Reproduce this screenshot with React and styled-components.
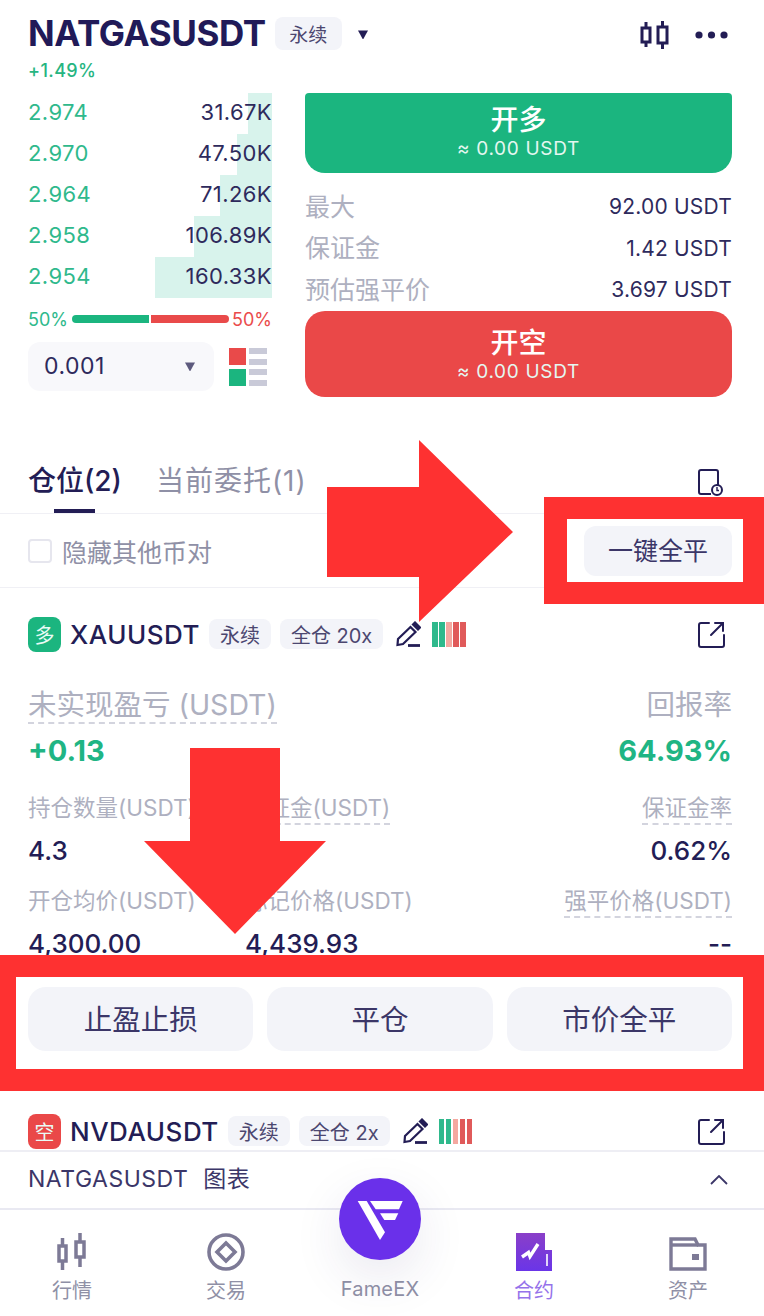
import styled, { createGlobalStyle } from "styled-components";

const asks = [
  { price: "2.974", amount: "31.67K", depth: 24 },
  { price: "2.970", amount: "47.50K", depth: 35 },
  { price: "2.964", amount: "71.26K", depth: 52 },
  { price: "2.958", amount: "106.89K", depth: 78 },
  { price: "2.954", amount: "160.33K", depth: 117 },
];

const meterColors = ["#2fb98c", "#2fb98c", "#f4a8a0", "#e05a5a", "#e05a5a"];

const GlobalStyle = createGlobalStyle`
  html, body {
    margin: 0;
    padding: 0;
    background: #fff;
  }
  body {
    font-family: "Inter", "Noto Sans CJK SC", sans-serif;
    color: #231d55;
  }
  * {
    box-sizing: border-box;
  }
`;

const Page = styled.div`
  position: relative;
  width: 764px;
  height: 1316px;
  overflow: hidden;
  display: flex;
  flex-direction: column;
  background: #fff;
`;

const Header = styled.div`
  height: 93px;
  padding: 15px 32px 0 28px;
  flex-shrink: 0;
`;

const TitleRow = styled.div`
  display: flex;
  align-items: center;
  height: 36px;
`;

const Title = styled.div`
  font-size: 35px;
  font-weight: 700;
  letter-spacing: -0.4px;
  color: #211a58;
`;

const Tag = styled.span`
  display: inline-flex;
  align-items: center;
  justify-content: center;
  height: ${(p) => p.$h || 30}px;
  padding: 0 ${(p) => p.$pad || 11}px;
  margin-left: ${(p) => p.$ml || 0}px;
  background: #f3f4f9;
  border-radius: 8px;
  font-size: ${(p) => p.$size || 20}px;
  color: #4c4770;
  white-space: nowrap;
`;

const CaretSlot = styled.span`
  display: flex;
  margin-left: 15px;
  margin-top: 1px;
`;

const HeaderTools = styled.div`
  margin-left: auto;
  margin-top: 4px;
  padding-right: 4px;
  display: flex;
  align-items: center;
  gap: 25px;
`;

const Change = styled.div`
  margin-top: 10px;
  font-size: 18px;
  font-weight: 500;
  letter-spacing: 0.4px;
  line-height: 20px;
  color: #26b581;
`;

const Market = styled.div`
  display: flex;
  gap: 33px;
  height: 304px;
  padding: 0 32px 0 28px;
  flex-shrink: 0;
`;

const BookCol = styled.div`
  width: 244px;
  flex-shrink: 0;
`;

const BookRow = styled.div`
  position: relative;
  display: flex;
  justify-content: space-between;
  align-items: center;
  height: 41px;
  padding-bottom: 4px;
  font-size: 22px;
  letter-spacing: 0.4px;
`;

const DepthBar = styled.div`
  position: absolute;
  top: 0;
  bottom: 0;
  right: 0;
  background: #d8f3ec;
`;

const Price = styled.span`
  position: relative;
  color: #2fb98c;
`;

const Amount = styled.span`
  position: relative;
  color: #2e2a5c;
`;

const RatioRow = styled.div`
  display: flex;
  align-items: center;
  justify-content: space-between;
  height: 24px;
  margin-top: 9px;
  font-size: 18px;
`;

const RatioText = styled.span`
  color: ${(p) => (p.$sell ? "#ea4b4b" : "#2fb98c")};
`;

const RatioBar = styled.div`
  display: flex;
  gap: 2px;
  width: 157px;
  height: 8px;
`;

const RatioPart = styled.div`
  flex: 1;
  background: ${(p) => (p.$sell ? "#e94a4a" : "#1bb57f")};
  border-radius: ${(p) => (p.$sell ? "0 4px 4px 0" : "4px 0 0 4px")};
`;

const DepthRow = styled.div`
  display: flex;
  align-items: center;
  justify-content: space-between;
  margin-top: 11px;
  padding-right: 5px;
`;

const DepthSelect = styled.div`
  display: flex;
  align-items: center;
  justify-content: space-between;
  width: 186px;
  height: 49px;
  padding: 0 18px 1px 16px;
  background: #f8f8fb;
  border-radius: 12px;
  font-size: 23px;
  letter-spacing: 0.5px;
  color: #2e2a5c;
`;

const TradeCol = styled.div`
  flex: 1;
  display: flex;
  flex-direction: column;
`;

const TradeButton = styled.div`
  display: flex;
  flex-direction: column;
  align-items: center;
  justify-content: center;
  height: ${(p) => (p.$sell ? 86 : 80)}px;
  padding-bottom: ${(p) => (p.$sell ? 0 : 5)}px;
  color: #fff;
  background: ${(p) => (p.$sell ? "#ea4848" : "#1bb57f")};
  border-radius: ${(p) => (p.$sell ? "20px" : "4px 4px 20px 20px")};
`;

const TradeTitle = styled.div`
  font-size: 28px;
  font-weight: 500;
  line-height: 36px;
`;

const TradeSub = styled.div`
  font-size: 19px;
  line-height: 22px;
  letter-spacing: 0.7px;
  color: #e4f7f0;
`;

const InfoList = styled.div`
  display: flex;
  flex-direction: column;
  height: 138px;
  padding-top: 13px;
`;

const InfoRow = styled.div`
  display: flex;
  justify-content: space-between;
  align-items: center;
  height: 41.5px;
  font-size: 21px;
  letter-spacing: 0.2px;
  color: #2e2a5c;
`;

const InfoLabel = styled.span`
  margin-bottom: 4px;
  font-size: 25px;
  letter-spacing: 0;
  color: #aeb0c0;
`;

const TabsBar = styled.div`
  display: flex;
  align-items: flex-end;
  height: 117px;
  padding: 0 40px 0 28px;
  border-bottom: 1px solid #f0f0f5;
  flex-shrink: 0;
`;

const TabItem = styled.div`
  position: relative;
  height: 63px;
  padding-top: 10px;
  margin-right: 34px;
  font-size: 28px;
  line-height: 42px;
  letter-spacing: ${(p) => (p.$active ? 0 : 1)}px;
  font-weight: ${(p) => (p.$active ? 500 : 400)};
  color: ${(p) => (p.$active ? "#231d55" : "#8f90a6")};
  &::after {
    content: "";
    display: ${(p) => (p.$active ? "block" : "none")};
    position: absolute;
    left: 26px;
    bottom: 0;
    width: 41px;
    height: 4px;
    background: #231d55;
  }
`;

const TabTools = styled.div`
  margin-left: auto;
  align-self: flex-end;
  padding-bottom: 13px;
`;

const FilterRow = styled.div`
  display: flex;
  align-items: center;
  justify-content: space-between;
  height: 74px;
  padding: 0 32px 0 28px;
  border-bottom: 1px solid #f0f0f5;
  flex-shrink: 0;
`;

const CheckLabel = styled.label`
  display: flex;
  align-items: center;
  gap: 10px;
  font-size: 25px;
  color: #8f90a6;
`;

const CheckBox = styled.span`
  width: 24px;
  height: 24px;
  border: 2px solid #e6e6ee;
  border-radius: 4px;
`;

const ActionButton = styled.div`
  display: flex;
  align-items: center;
  justify-content: center;
  width: ${(p) => p.$w || "auto"};
  flex: ${(p) => (p.$w ? "none" : 1)};
  height: ${(p) => p.$h}px;
  padding-bottom: 3px;
  background: #f3f4f9;
  border-radius: ${(p) => p.$r}px;
  font-size: ${(p) => p.$size}px;
  color: #3b3668;
`;

const Positions = styled.div`
  height: 562px;
  overflow: hidden;
  padding: 28px 32px 0 28px;
  flex-shrink: 0;
`;

const PositionHead = styled.div`
  display: flex;
  align-items: center;
  height: 36px;
`;

const SideBadge = styled.span`
  display: inline-flex;
  align-items: center;
  justify-content: center;
  width: 33px;
  height: 35px;
  border-radius: 8px;
  background: ${(p) => (p.$sell ? "#ea4848" : "#1bb57f")};
  color: #e9fbf5;
  font-size: 20px;
`;

const Symbol = styled.span`
  margin-left: 9px;
  margin-right: 9px;
  font-size: 26px;
  font-weight: 500;
  letter-spacing: 0.5px;
  color: #231d55;
`;

const EditSlot = styled.span`
  display: flex;
  margin-left: 12px;
`;

const Meter = styled.span`
  display: inline-flex;
  gap: 1.5px;
  margin-left: 11px;
`;

const MeterBar = styled.span`
  width: 5.5px;
  height: 25px;
  background: ${(p) => p.$c};
`;

const HeadLink = styled.span`
  margin-left: auto;
  margin-right: 7px;
  display: flex;
`;

const SummaryRow = styled.div`
  display: flex;
  justify-content: space-between;
  margin-top: 36px;
`;

const StatBlock = styled.div`
  display: flex;
  flex-direction: column;
  align-items: ${(p) => (p.$right ? "flex-end" : "flex-start")};
`;

const BigLabel = styled.span`
  font-size: 28.5px;
  line-height: 34px;
  color: #aeb0c0;
  border-bottom: 2px ${(p) => (p.$dotted ? "dashed #d3d4de" : "solid transparent")};
`;

const BigValue = styled.span`
  margin-top: 9px;
  font-size: 29px;
  font-weight: 700;
  line-height: 36px;
  color: #1fb584;
`;

const StatGrid = styled.div`
  display: grid;
  grid-template-columns: 217px 1fr auto;
  margin-top: 24px;
  row-gap: 17px;
`;

const SmallLabel = styled.span`
  font-size: 22.5px;
  line-height: 30px;
  color: #aeb0c0;
  border-bottom: 2px ${(p) => (p.$dotted ? "dashed #d3d4de" : "solid transparent")};
`;

const SmallValue = styled.span`
  margin-top: 8px;
  font-size: 26px;
  font-weight: 500;
  line-height: 36px;
  color: #231d55;
`;

const ActionRow = styled.div`
  display: flex;
  gap: 14px;
  margin-top: 25px;
`;

const SecondHead = styled(PositionHead)`
  margin-top: 62px;
`;

const ChartBar = styled.div`
  display: flex;
  align-items: center;
  justify-content: space-between;
  height: 60px;
  padding: 0 36px 0 28px;
  border-top: 2px solid #eeeef4;
  border-bottom: 2px solid #e9e9f2;
  color: #3b3668;
  flex-shrink: 0;
`;

const ChartTitle = styled.span`
  display: flex;
  align-items: baseline;
  gap: 15px;
  margin-bottom: 2px;
  font-size: 23px;
  line-height: 30px;
  letter-spacing: 0.5px;
`;

const Nav = styled.div`
  flex: 1;
  display: grid;
  grid-template-columns: repeat(5, 154px);
  margin-left: -5px;
  padding-top: 19px;
`;

const NavItem = styled.div`
  display: flex;
  flex-direction: column;
  align-items: center;
  justify-content: flex-end;
  height: 74px;
  gap: 8px;
  font-size: 20px;
  line-height: 24px;
  color: ${(p) => (p.$active ? "#9572ea" : "#8f90a6")};
`;

const FameLabel = styled.span`
  margin-bottom: 2px;
  letter-spacing: 0.2px;
`;

const Fab = styled.div`
  position: absolute;
  left: 339px;
  top: 1178px;
  width: 82px;
  height: 82px;
  border-radius: 50%;
  background: #6a30ea;
  box-shadow: 0 18px 50px rgba(50, 40, 110, 0.1);
`;

const RedFrame = styled.div`
  position: absolute;
  left: ${(p) => p.$x}px;
  top: ${(p) => p.$y}px;
  width: ${(p) => p.$w}px;
  height: ${(p) => p.$h}px;
  border-style: solid;
  border-color: #fe3131;
  border-width: ${(p) => p.$b};
`;

const Arrow = styled.svg`
  position: absolute;
  left: ${(p) => p.$x}px;
  top: ${(p) => p.$y}px;
`;

function Caret({ size = 12, color = "#231d55" }) {
  return (
    <svg width={size} height={size} viewBox="0 0 12 12">
      <path d="M1 2.5h10L6.6 10.4a.7.7 0 0 1-1.2 0z" fill={color} />
    </svg>
  );
}

function CandleIcon() {
  return (
    <svg width="30" height="30" viewBox="0 0 30 30" fill="none" stroke="#231d55" strokeWidth="3">
      <rect x="2" y="8" width="8" height="14" />
      <rect x="18" y="7" width="9" height="16" />
      <path d="M6 2v6M6 22v5M22.500 1v6M22.500 23v6" />
    </svg>
  );
}

function NavCandleIcon() {
  return (
    <svg width="30" height="38" viewBox="0 0 30 38" fill="none" stroke="#7d7a96" strokeWidth="3.5">
      <rect x="2" y="13" width="7" height="15" />
      <rect x="19" y="9" width="8" height="15" />
      <path d="M5.500 5v8M5.500 28v9M23 0v9M23 24v10" />
    </svg>
  );
}

function EditIcon() {
  return (
    <svg width="26" height="26" viewBox="0 0 26 26" fill="none" stroke="#231d55" strokeWidth="2.2">
      <path d="M2.500 24l.5-6L15.500 6l5 5L8 23z" />
      <path d="M18 3.500l2-2 5 5-2 2z" fill="#231d55" />
      <path d="M13 24.500h12" strokeWidth="2.800" />
    </svg>
  );
}

function LinkIcon() {
  return (
    <svg width="27" height="27" viewBox="0 0 27 27" fill="none" stroke="#231d55" strokeWidth="2" strokeLinecap="round">
      <path d="M11 2H3a2 2 0 0 0-2 2v20a2 2 0 0 0 2 2h21a2 2 0 0 0 2-2V14" />
      <path d="M13 14 25 2M17 2h8v8" />
    </svg>
  );
}

function HistoryIcon() {
  return (
    <svg width="27" height="28" viewBox="0 0 27 28" fill="none" stroke="#231d55" strokeWidth="2">
      <path d="M14 26H4a2 2 0 0 1-2-2V4a2 2 0 0 1 2-2h15a2 2 0 0 1 2 2v13" />
      <circle cx="20" cy="22" r="5" />
      <path d="M20 19v3.500h2" strokeWidth="1.400" />
    </svg>
  );
}

function PositionTitle({ side, symbol, margin, sell }) {
  return (
    <>
      <SideBadge $sell={sell}>{side}</SideBadge>
      <Symbol>{symbol}</Symbol>
      <Tag>永续</Tag>
      <Tag $ml={9}>{margin}</Tag>
      <EditSlot>
        <EditIcon />
      </EditSlot>
      <Meter>
        {meterColors.map((c, i) => (
          <MeterBar key={i} $c={c} />
        ))}
      </Meter>
      <HeadLink>
        <LinkIcon />
      </HeadLink>
    </>
  );
}

export default function App() {
  return (
    <Page>
      <GlobalStyle />
      <Header>
        <TitleRow>
          <Title>NATGASUSDT</Title>
          <Tag $ml={9} $h={33} $pad={14.5} $size={19}>
            永续
          </Tag>
          <CaretSlot>
            <Caret />
          </CaretSlot>
          <HeaderTools>
            <CandleIcon />
            <svg width="33" height="8" viewBox="0 0 33 8" fill="#231d55">
              <circle cx="4" cy="4" r="3.600" />
              <circle cx="16.500" cy="4" r="3.600" />
              <circle cx="29" cy="4" r="3.600" />
            </svg>
          </HeaderTools>
        </TitleRow>
        <Change>+1.49%</Change>
      </Header>

      <Market>
        <BookCol>
          {asks.map((row) => (
            <BookRow key={row.price}>
              <DepthBar style={{ width: row.depth }} />
              <Price>{row.price}</Price>
              <Amount>{row.amount}</Amount>
            </BookRow>
          ))}
          <RatioRow>
            <RatioText>50%</RatioText>
            <RatioBar>
              <RatioPart />
              <RatioPart $sell />
            </RatioBar>
            <RatioText $sell>50%</RatioText>
          </RatioRow>
          <DepthRow>
            <DepthSelect>
              0.001
              <Caret color="#5d5a7d" />
            </DepthSelect>
            <svg width="38" height="38" viewBox="0 0 38 38">
              <rect x="0" y="0" width="17" height="17" fill="#e94a4a" />
              <rect x="0" y="21" width="17" height="17" fill="#1bb57f" />
              <rect x="20" y="0" width="18" height="6" fill="#c9cad8" />
              <rect x="20" y="11" width="18" height="6" fill="#c9cad8" />
              <rect x="20" y="21" width="18" height="6" fill="#c9cad8" />
              <rect x="20" y="32" width="18" height="6" fill="#c9cad8" />
            </svg>
          </DepthRow>
        </BookCol>
        <TradeCol>
          <TradeButton>
            <TradeTitle>开多</TradeTitle>
            <TradeSub>≈ 0.00 USDT</TradeSub>
          </TradeButton>
          <InfoList>
            <InfoRow>
              <InfoLabel>最大</InfoLabel>
              92.00 USDT
            </InfoRow>
            <InfoRow>
              <InfoLabel>保证金</InfoLabel>
              1.42 USDT
            </InfoRow>
            <InfoRow>
              <InfoLabel>预估强平价</InfoLabel>
              3.697 USDT
            </InfoRow>
          </InfoList>
          <TradeButton $sell>
            <TradeTitle>开空</TradeTitle>
            <TradeSub>≈ 0.00 USDT</TradeSub>
          </TradeButton>
        </TradeCol>
      </Market>

      <TabsBar>
        <TabItem $active>仓位(2)</TabItem>
        <TabItem>当前委托(1)</TabItem>
        <TabTools>
          <HistoryIcon />
        </TabTools>
      </TabsBar>

      <FilterRow>
        <CheckLabel>
          <CheckBox />
          隐藏其他币对
        </CheckLabel>
        <ActionButton $w="148px" $h={50} $r={12} $size={25}>
          一键全平
        </ActionButton>
      </FilterRow>

      <Positions>
        <PositionHead>
          <PositionTitle side="多" symbol="XAUUSDT" margin="全仓 20x" />
        </PositionHead>

        <SummaryRow>
          <StatBlock>
            <BigLabel $dotted>未实现盈亏 (USDT)</BigLabel>
            <BigValue>+0.13</BigValue>
          </StatBlock>
          <StatBlock $right>
            <BigLabel>回报率</BigLabel>
            <BigValue>64.93%</BigValue>
          </StatBlock>
        </SummaryRow>

        <StatGrid>
          <StatBlock>
            <SmallLabel>持仓数量(USDT)</SmallLabel>
            <SmallValue>4.3</SmallValue>
          </StatBlock>
          <StatBlock>
            <SmallLabel $dotted>保证金(USDT)</SmallLabel>
            <SmallValue>1.42</SmallValue>
          </StatBlock>
          <StatBlock $right>
            <SmallLabel $dotted>保证金率</SmallLabel>
            <SmallValue>0.62%</SmallValue>
          </StatBlock>
          <StatBlock>
            <SmallLabel>开仓均价(USDT)</SmallLabel>
            <SmallValue>4,300.00</SmallValue>
          </StatBlock>
          <StatBlock>
            <SmallLabel>标记价格(USDT)</SmallLabel>
            <SmallValue>4,439.93</SmallValue>
          </StatBlock>
          <StatBlock $right>
            <SmallLabel $dotted>强平价格(USDT)</SmallLabel>
            <SmallValue>--</SmallValue>
          </StatBlock>
        </StatGrid>

        <ActionRow>
          <ActionButton $h={64} $r={18} $size={28.5}>
            止盈止损
          </ActionButton>
          <ActionButton $h={64} $r={18} $size={28.5}>
            平仓
          </ActionButton>
          <ActionButton $h={64} $r={18} $size={28.5}>
            市价全平
          </ActionButton>
        </ActionRow>

        <SecondHead>
          <PositionTitle side="空" symbol="NVDAUSDT" margin="全仓 2x" sell />
        </SecondHead>
      </Positions>

      <ChartBar>
        <ChartTitle>
          <span>NATGASUSDT</span>
          <span>图表</span>
        </ChartTitle>
        <svg width="18" height="10" viewBox="0 0 18 10" fill="none" stroke="#3b3668" strokeWidth="1.800">
          <path d="M1 9l8-8 8 8" />
        </svg>
      </ChartBar>

      <Nav>
        <NavItem>
          <NavCandleIcon />
          行情
        </NavItem>
        <NavItem>
          <svg width="38" height="38" viewBox="0 0 38 38" fill="none" stroke="#7d7a96">
            <circle cx="19" cy="19" r="17" strokeWidth="3.600" />
            <path d="M19 10l9 9-9 9-9-9z" strokeWidth="3.600" />
          </svg>
          交易
        </NavItem>
        <NavItem>
          <FameLabel>FameEX</FameLabel>
        </NavItem>
        <NavItem $active>
          <svg width="36" height="38" viewBox="0 0 36 38">
            <defs>
              <linearGradient id="contractFill" x1="0" y1="0" x2="0" y2="1">
                <stop offset="0" stopColor="#8a3fc8" />
                <stop offset="1" stopColor="#6a35e8" />
              </linearGradient>
            </defs>
            <path d="M0 0h29v17h7v21H0z" fill="url(#contractFill)" />
            <path d="M6 24l6.500-4.500L14 23.500 22 11" fill="none" stroke="#fff" strokeWidth="3.400" />
            <path d="M31 21v12" stroke="#fff" strokeWidth="1.600" />
          </svg>
          合约
        </NavItem>
        <NavItem>
          <svg width="38" height="34" viewBox="0 0 38 34" fill="none" stroke="#7d7a96" strokeWidth="3.400">
            <path d="M2 32V2h24l3 6h7v24z" />
            <path d="M2 8h27" />
            <rect x="23" y="17" width="7" height="6" fill="#7d7a96" stroke="none" />
          </svg>
          资产
        </NavItem>
      </Nav>

      <Fab>
        <svg width="82" height="82" viewBox="0 0 82 82" fill="#fff">
          <path d="M18.700 23h9L46 54.300 41 62z" />
          <path d="M31 23h32.700L60 31.300H36.700z" />
          <path d="M41 35.300h18.300L56 42H45.300z" />
        </svg>
      </Fab>

      <RedFrame $x={544} $y={497} $w={220} $h={107} $b="22px 21px 22px 23px" />
      <RedFrame $x={-10} $y={955} $w={774} $h={136} $b="22px 21px 22px 26px" />
      <Arrow $x={327} $y={440} width="186" height="182" viewBox="0 0 186 182" fill="#fe3131">
        <path d="M0 47h92V0l94 92-94 90v-45H0z" />
      </Arrow>
      <Arrow $x={144} $y={748} width="182" height="186" viewBox="0 0 182 186" fill="#fe3131">
        <path d="M46 0h90v93h46l-91 93L0 93h46z" />
      </Arrow>
    </Page>
  );
}
